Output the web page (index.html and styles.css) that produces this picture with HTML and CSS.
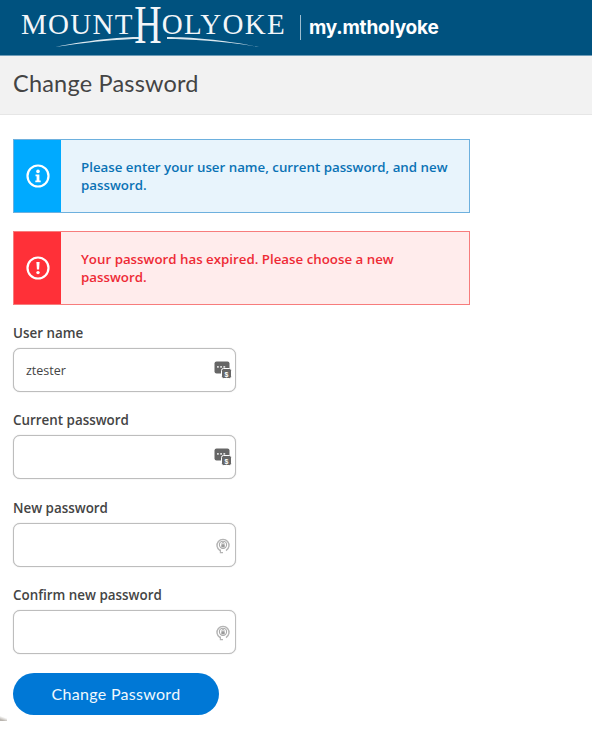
FILE: index.html
```html
<!DOCTYPE html>
<html lang="en">
<head>
    <meta charset="UTF-8">
    <meta name="viewport" content="width=device-width, initial-scale=1.0">
    <title>Change Password</title>
    <link rel="stylesheet" href="styles.css">
</head>
<body>
    <header class="site-header">
        <div class="logo">
            <span class="logo-word">MOUNT</span><span class="logo-h">H</span><span class="logo-word">OLYOKE</span>
            <svg class="logo-swoosh" width="204" height="14" viewBox="0 0 204 14">
                <path d="M0 13 C40 5 70 3 84 3 L84 5 C70 5 40 7 0 13Z M204 13 C170 6 135 3 112 3 L112 5 C135 5 170 7 204 13Z" fill="#dce9f0"/>
            </svg>
        </div>
        <span class="logo-divider"></span>
        <span class="portal-name">my.mtholyoke</span>
    </header>

    <div class="title-bar">
        <h1>Change Password</h1>
    </div>

    <main class="content">
        <div class="alert alert-info">
            <div class="alert-icon">
                <svg width="26" height="26" viewBox="0 0 26 26">
                    <circle cx="13" cy="13" r="10.5" fill="none" stroke="#fff" stroke-width="2.2"/>
                    <circle cx="13" cy="8.4" r="1.8" fill="#fff"/>
                    <path d="M10.5 11.4h3.9v6h1.3v1.8h-5.4v-1.8h1.3v-4.2h-1.1z" fill="#fff"/>
                </svg>
            </div>
            <p>Please enter your user name, current password, and new password.</p>
        </div>

        <div class="alert alert-error">
            <div class="alert-icon">
                <svg width="26" height="26" viewBox="0 0 26 26">
                    <circle cx="13" cy="13" r="10.5" fill="none" stroke="#fff" stroke-width="2.2"/>
                    <path d="M11.4 7h3.2l-.5 7.6h-2.2z" fill="#fff"/>
                    <circle cx="13" cy="17.6" r="1.7" fill="#fff"/>
                </svg>
            </div>
            <p>Your password has expired. Please choose a new password.</p>
        </div>

        <form class="password-form">
            <div class="input-group">
                <label for="username">User name</label>
                <div class="input-wrap">
                    <input type="text" id="username" value="ztester">
                    <svg class="input-icon" width="18" height="18" viewBox="0 0 18 18">
                        <rect x="0.5" y="0.5" width="15" height="12" rx="2" fill="#666"/>
                        <path d="M3 5h1.8v1.8H3zM6.2 5H8v1.8H6.2zM9.4 5h1.8v1.8H9.4z" fill="#ddd"/>
                        <rect x="7.5" y="7.5" width="10" height="10" rx="2" fill="#666" stroke="#fff"/>
                        <text x="12.5" y="15.6" class="icon-letter">$</text>
                    </svg>
                </div>
            </div>
            <div class="input-group">
                <label for="current">Current password</label>
                <div class="input-wrap">
                    <input type="password" id="current">
                    <svg class="input-icon" width="18" height="18" viewBox="0 0 18 18">
                        <rect x="0.5" y="0.5" width="15" height="12" rx="2" fill="#666"/>
                        <path d="M3 5h1.8v1.8H3zM6.2 5H8v1.8H6.2zM9.4 5h1.8v1.8H9.4z" fill="#ddd"/>
                        <rect x="7.5" y="7.5" width="10" height="10" rx="2" fill="#666" stroke="#fff"/>
                        <text x="12.5" y="15.6" class="icon-letter">$</text>
                    </svg>
                </div>
            </div>
            <div class="input-group">
                <label for="new">New password</label>
                <div class="input-wrap">
                    <input type="password" id="new">
                    <svg class="input-icon input-icon-key" width="16" height="18" viewBox="0 0 16 18">
                        <path d="M5 14.6A6 6 0 1 1 11 14.6" fill="none" stroke="#b4b4b4" stroke-width="1.4"/>
                        <circle cx="8" cy="8.8" r="3.6" fill="none" stroke="#aaa" stroke-width="1.1"/>
                        <rect x="6.3" y="8.2" width="3.4" height="3" rx=".5" fill="#999"/>
                        <path d="M7 8.2V7.4a1 1 0 0 1 2 0v.8" fill="none" stroke="#999" stroke-width=".8"/>
                        <path d="M5.4 13.5v3.2h2.6" fill="none" stroke="#b4b4b4" stroke-width="1.2"/>
                    </svg>
                </div>
            </div>
            <div class="input-group">
                <label for="confirm">Confirm new password</label>
                <div class="input-wrap">
                    <input type="password" id="confirm">
                    <svg class="input-icon input-icon-key" width="16" height="18" viewBox="0 0 16 18">
                        <path d="M5 14.6A6 6 0 1 1 11 14.6" fill="none" stroke="#b4b4b4" stroke-width="1.4"/>
                        <circle cx="8" cy="8.8" r="3.6" fill="none" stroke="#aaa" stroke-width="1.1"/>
                        <rect x="6.3" y="8.2" width="3.4" height="3" rx=".5" fill="#999"/>
                        <path d="M7 8.2V7.4a1 1 0 0 1 2 0v.8" fill="none" stroke="#999" stroke-width=".8"/>
                        <path d="M5.4 13.5v3.2h2.6" fill="none" stroke="#b4b4b4" stroke-width="1.2"/>
                    </svg>
                </div>
            </div>
            <button type="button" class="submit-btn">Change Password</button>
        </form>
    </main>
    <div class="corner-shade"></div>
</body>
</html>
```

FILE: styles.css
```css
* {
    box-sizing: border-box;
}

html, body {
    height: 100%;
}

body {
    position: relative;
    margin: 0;
    background: #fff;
    color: #3c3c3c;
    font-family: 'Open Sans', 'Noto Sans', sans-serif;
}

.site-header {
    height: 56px;
    background: #00527f;
    border-bottom: 1px solid #6f9db8;
    display: flex;
    align-items: center;
    padding-left: 21px;
    color: #fff;
}

.logo {
    position: relative;
    display: flex;
    align-items: center;
    width: 263px;
    height: 55px;
    padding-bottom: 8px;
    flex: none;
    font-family: 'Liberation Serif', serif;
    color: #f2f6f9;
}

.logo-word {
    font-size: 29px;
    line-height: 34px;
    letter-spacing: 1.3px;
    flex: none;
}

.logo-h {
    font-size: 36px;
    line-height: 42px;
    margin: 3px 1px 0;
    flex: none;
    transform: scale(1.05, 1.5);
}

.logo-swoosh {
    position: absolute;
    left: 34px;
    top: 34px;
}

.logo-divider {
    width: 1px;
    height: 25px;
    background: #9dbdd0;
    margin-left: 16px;
}

.portal-name {
    margin-left: 8px;
    font-family: 'Inter', 'Liberation Sans', sans-serif;
    font-size: 19px;
    font-weight: 700;
    letter-spacing: -0.2px;
}

.title-bar {
    height: 59px;
    background: #f2f2f2;
    border-bottom: 1px solid #e6e6e6;
    padding: 0 13px;
    display: flex;
    align-items: center;
}

h1 {
    margin: 0 0 5px;
    font-family: 'Lato', 'Open Sans', sans-serif;
    font-size: 23.5px;
    font-weight: 400;
    letter-spacing: 0.2px;
    color: #444;
}

.content {
    padding: 24px 13px 0;
}

.alert {
    width: 457px;
    height: 74px;
    display: flex;
    border: 1px solid;
    margin-bottom: 18px;
}

.alert p {
    margin: 0 0 0 1px;
    padding: 0 19px;
    flex: 1;
    align-self: center;
    font-size: 13.3px;
    font-weight: 600;
    line-height: 18.5px;
}

.alert-icon {
    width: 47px;
    flex: none;
    display: flex;
    align-items: center;
    justify-content: center;
}

.alert-info {
    background: #e8f4fc;
    border-color: #6db0de;
    color: #0a72b5;
}

.alert-info .alert-icon {
    background: #00aaff;
}

.alert-error {
    background: #ffecec;
    border-color: #f77c7c;
    color: #ee2a35;
}

.alert-error .alert-icon {
    background: #ff3038;
}

.password-form {
    margin-top: 19px;
}

.input-group {
    margin-bottom: 19.35px;
}

label {
    display: block;
    margin-bottom: 6px;
    font-size: 13.4px;
    font-weight: 600;
    line-height: 18px;
    color: #444;
}

.input-wrap {
    position: relative;
    width: 223px;
}

input {
    display: block;
    width: 100%;
    height: 44px;
    padding: 0 34px 0 12px;
    border: 1px solid #bdbdbd;
    border-radius: 7px;
    box-shadow: 0 0 1px #b5b5b5;
    background: #fff;
    font-family: inherit;
    font-size: 12.5px;
    color: #444;
}

.input-icon {
    position: absolute;
    right: 4px;
    top: 13px;
}

.input-icon-key {
    right: 5px;
    top: 13px;
}

.icon-letter {
    font-family: 'Liberation Sans', sans-serif;
    font-size: 7px;
    font-weight: 700;
    fill: #fff;
    text-anchor: middle;
}

.submit-btn {
    display: block;
    width: 206px;
    height: 42px;
    padding-bottom: 2px;
    background: #0078d6;
    color: #f1f8fd;
    border: none;
    border-radius: 21px;
    font-family: 'Lato', 'Open Sans', sans-serif;
    font-size: 16px;
    letter-spacing: 0.3px;
    cursor: pointer;
}

.corner-shade {
    position: absolute;
    left: 0;
    top: 716px;
    width: 7px;
    height: 5px;
    background: linear-gradient(20deg, #b9b4ae 20%, rgba(255,255,255,0) 70%);
}
```
